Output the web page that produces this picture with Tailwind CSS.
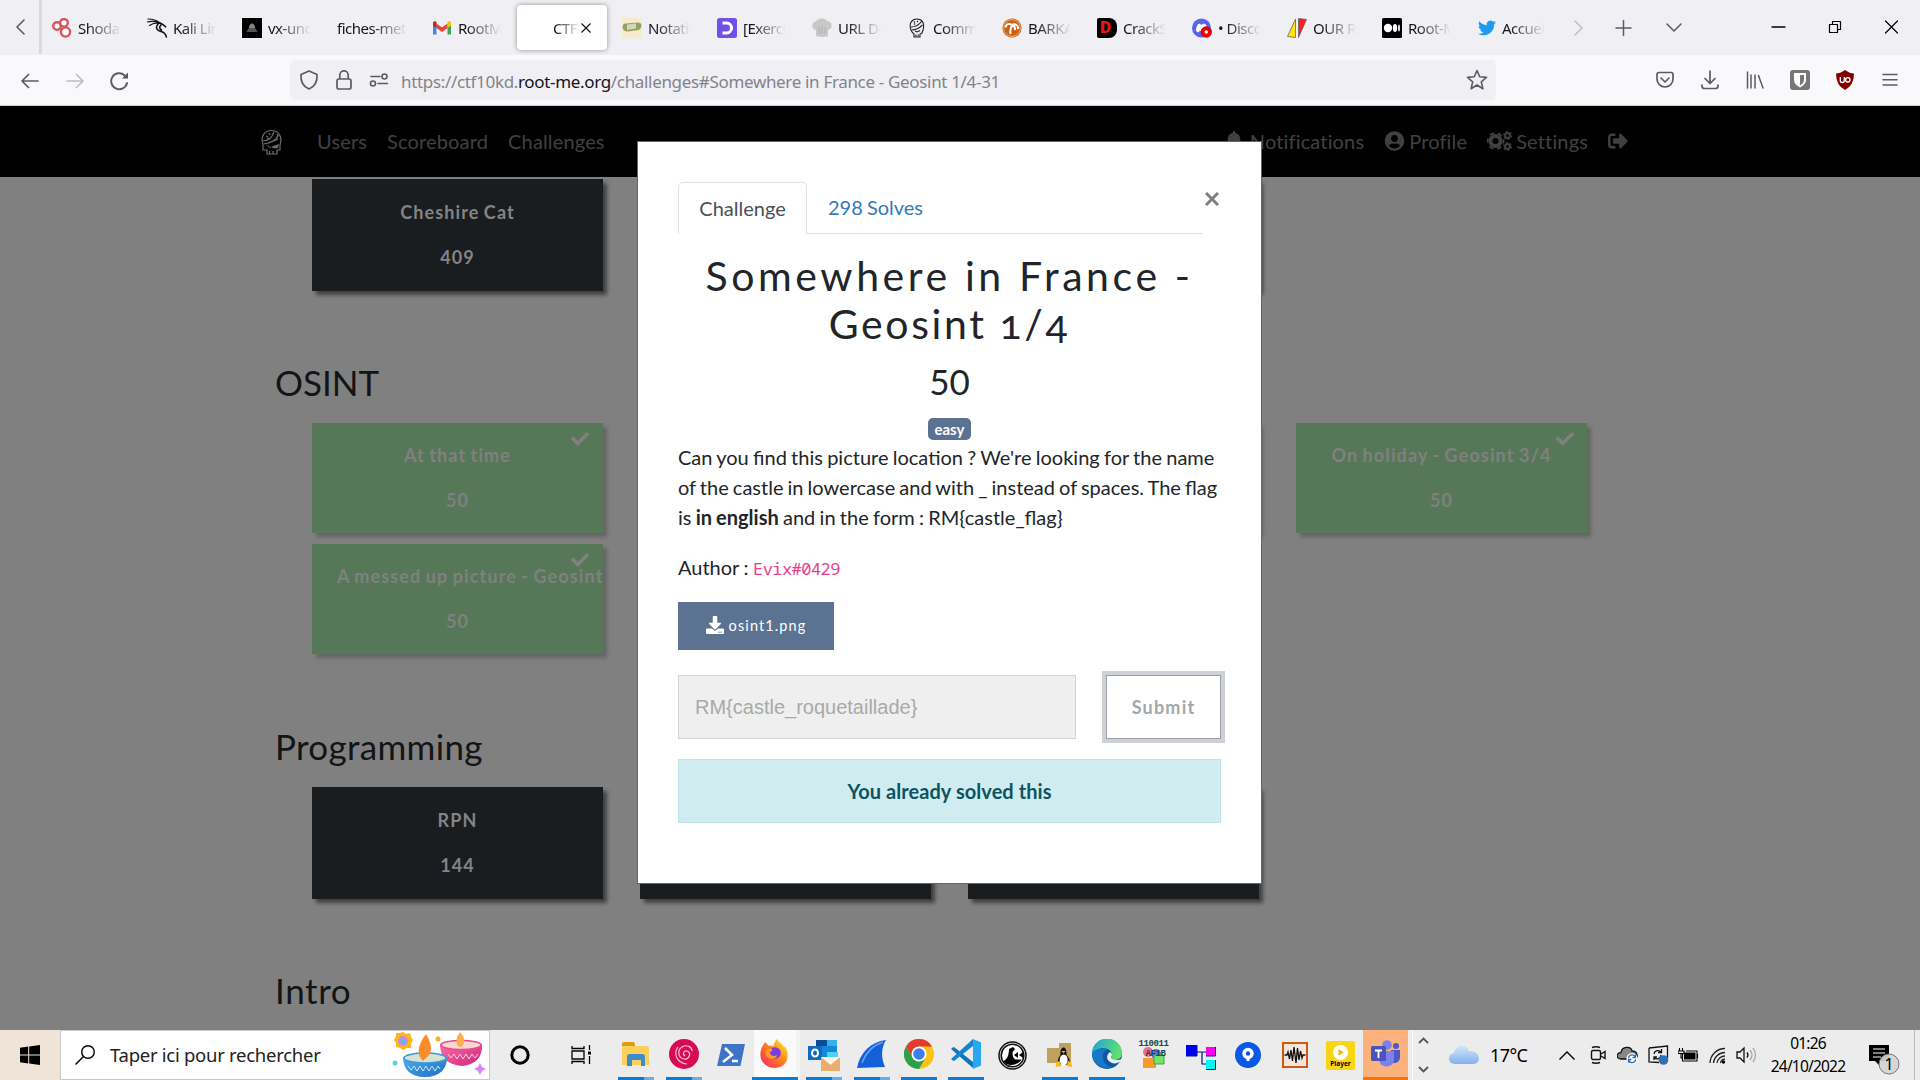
<!DOCTYPE html>
<html lang="fr">
<head>
<meta charset="utf-8">
<title>CTF</title>
<script src="https://cdn.jsdelivr.net/npm/@tailwindcss/browser@4"></script>
</head>
<body class="w-[1920px] h-[1080px] overflow-hidden flex flex-col font-['Lato',sans-serif] text-[20px] bg-[#808080]">

<!-- tab strip -->
<div class="h-[55px] shrink-0 bg-[#f0eff4] flex font-['Noto_Sans',sans-serif] text-[15px] tracking-[-0.5px] text-[#15141a]">
  <div class="w-[42px] h-[54px] flex items-center pl-[15px] border-r-[3px] border-[#d9d9de] shrink-0">
    <svg class="w-3 h-4" viewBox="0 0 12 16" fill="none" stroke="#5b5b66" stroke-width="1.6" stroke-linecap="round" stroke-linejoin="round"><path d="M9 1 2 8l7 7"/></svg>
  </div>
  <div class="w-[95px] flex items-center pl-[10px] gap-[6px] shrink-0">
    <svg class="w-5 h-5" viewBox="0 0 20 20" fill="#fff" stroke="#d6545c" stroke-width="2.4"><circle cx="5" cy="8" r="3.800"/><circle cx="12" cy="4.800" r="3.800"/><circle cx="13.500" cy="14" r="4.600"/></svg>
    <span class="w-[43px] pt-px overflow-hidden whitespace-nowrap mask-r-from-20%">Shodan</span>
  </div>
  <div class="w-[95px] flex items-center pl-[10px] gap-[6px] shrink-0">
    <svg class="w-5 h-5" viewBox="0 0 20 20" fill="none" stroke="#111" stroke-width="1.200" stroke-linecap="round"><path d="M1 1c5 0 9 1.500 12 4M0 4c4-1 8-.8 12 .8M2.500 7.500C6 5 9 4.500 12 5.500"/><path d="M12 5c3 .2 4.500 1.500 6.500 3.800M11.500 5.500c-3 3-2.500 6 .5 7.200 4 1.300 6 2 7.500 6.300M14 7c-2 2-1.500 4 .5 5" stroke-width="1.600"/></svg>
    <span class="w-[43px] pt-px overflow-hidden whitespace-nowrap mask-r-from-20%">Kali Linux</span>
  </div>
  <div class="w-[95px] flex items-center pl-[10px] gap-[6px] shrink-0">
    <svg class="w-5 h-5" viewBox="0 0 20 20"><path d="M0 0h20v20H0z"/><path d="M7 10c0-6 6-6 6 0l2.500 4h-11z" fill="#888"/><path d="M6 11h8M5 13h10" stroke="#222"/></svg>
    <span class="w-[43px] pt-px overflow-hidden whitespace-nowrap mask-r-from-20%">vx-underground</span>
  </div>
  <div class="w-[95px] flex items-center pl-[10px] shrink-0">
    <span class="w-[70px] pt-px overflow-hidden whitespace-nowrap mask-r-from-50%">fiches-methodes</span>
  </div>
  <div class="w-[95px] flex items-center pl-[10px] gap-[6px] shrink-0">
    <svg class="w-5 h-5" viewBox="0 0 20 20"><path d="M1 5v11.500h3.500V7z" fill="#4285f4"/><path d="M19 5v11.500h-3.500V7z" fill="#34a853"/><path d="M4.500 5.500 10 9.500l5.500-4V10L10 14l-5.500-4z" fill="#ea4335"/><path d="M1 5.200C1 3 3 2.700 4.500 3.900V10L1 7.500z" fill="#c5221f"/><path d="M19 5.200c0-2.200-2-2.500-3.500-1.300V10L19 7.500z" fill="#fbbc04"/></svg>
    <span class="w-[43px] pt-px overflow-hidden whitespace-nowrap mask-r-from-20%">RootMe</span>
  </div>
  <div class="w-[90px] h-[45px] mt-[5px] mr-[5px] rounded-[4px] bg-white shadow-[0_0_5px_rgba(0,0,0,0.4)] flex items-center pl-[36px] shrink-0">
    <span class="w-[26px] pt-px overflow-hidden whitespace-nowrap mask-r-from-10%">CTF10K</span>
    <svg class="ml-[1px] w-[12px] h-[12px]" viewBox="0 0 12 12" stroke="#15141a" stroke-width="1.200"><path d="m1.500 1.500 9 9M10.500 1.500l-9 9"/></svg>
  </div>
  <div class="w-[95px] flex items-center pl-[10px] gap-[6px] shrink-0">
    <svg class="w-5 h-5" viewBox="0 0 20 20"><path d="M0 0h20v20H0z" fill="#f6ebcd"/><path d="M.5 8.500q.5-3 3-3l12-1q4 0 4 3 0 3-2.500 4.500l-11 1.500Q.5 13.500.5 8.500" fill="#98a05f"/><path d="m5 6.500 9-1v5l-9 1.500z" fill="#d3d8ba"/></svg>
    <span class="w-[43px] pt-px overflow-hidden whitespace-nowrap mask-r-from-20%">Notation</span>
  </div>
  <div class="w-[95px] flex items-center pl-[10px] gap-[6px] shrink-0">
    <svg class="w-5 h-5" viewBox="0 0 20 20"><rect width="20" height="20" rx="2.500" fill="#7050e8"/><path d="M5.500 5h4a5 5 0 0 1 0 10h-4" fill="none" stroke="#fff" stroke-width="3"/></svg>
    <span class="w-[43px] pt-px overflow-hidden whitespace-nowrap mask-r-from-20%">[Exercices]</span>
  </div>
  <div class="w-[95px] flex items-center pl-[10px] gap-[6px] shrink-0">
    <svg class="w-5 h-5" viewBox="0 0 20 20" fill="#c8c8c8"><path d="M4 18v-6C-1 11-1 3.500 4 3.500 5.500-.5 14 -.5 15 3c6 0 6 8 1 9v6q-6 2-12 0"/><path d="M7 9v7M10 8v8M13 9v7" stroke="#b0b0b0"/></svg>
    <span class="w-[43px] pt-px overflow-hidden whitespace-nowrap mask-r-from-20%">URL Decode</span>
  </div>
  <div class="w-[95px] flex items-center pl-[10px] gap-[6px] shrink-0">
    <svg class="w-5 h-5" viewBox="0 0 20 20" fill="none" stroke="#222" stroke-width="1.100"><path d="M4 12C1.500 5 5 1 10 1s8 4 6 11l-1 3-2 1v3H7v-3l-2-2z"/><path d="M4 9c4 0 8-2 11-6M4.500 12c5 0 8-2 11-5M7 3.500l1 1M10 3l1 1M7 6.500l1-1M8 13l2 1 3-1.500M9 16.500v2M11.200 16.500v2"/></svg>
    <span class="w-[43px] pt-px overflow-hidden whitespace-nowrap mask-r-from-20%">Communauté</span>
  </div>
  <div class="w-[95px] flex items-center pl-[10px] gap-[6px] shrink-0">
    <svg class="w-5 h-5" viewBox="0 0 20 20"><circle cx="10" cy="10" r="9.600" fill="#ce6210"/><circle cx="10" cy="10" r="8.400" fill="none" stroke="#f3c9a0" stroke-width=".7"/><path d="M3.500 9.500C4 6 7 5 9.500 6.800M16 11c.5-4-3-6-6.500-4M13 12c.3-3-1-4.500-3-4.800M10 7.500C8.500 10 8 12.500 8.500 16" fill="none" stroke="#fff" stroke-width="2"/></svg>
    <span class="w-[43px] pt-px overflow-hidden whitespace-nowrap mask-r-from-20%">BARKA</span>
  </div>
  <div class="w-[95px] flex items-center pl-[10px] gap-[6px] shrink-0">
    <span class="w-5 h-5 pl-[3px] flex items-center rounded-r-[8px] rounded-l-[2px] bg-black text-[#f01010] font-black text-[17px] font-['Roboto',sans-serif] tracking-normal">D</span>
    <span class="w-[43px] pt-px overflow-hidden whitespace-nowrap mask-r-from-20%">CrackStation</span>
  </div>
  <div class="w-[95px] flex items-center pl-[10px] gap-[6px] shrink-0">
    <svg class="w-5 h-5" viewBox="0 0 20 20"><circle cx="9.500" cy="10" r="9.500" fill="#5865f2"/><path d="M4 13c0-3 .8-5.500 2-6.800l2-.6.600 1h2.300l.6-1 2 .6c1.200 1.300 2 3.800 2 6.800l-2.500 1.500-1-1.500H7.500l-1 1.500z" fill="#fff"/><circle cx="14.300" cy="14" r="5.700" fill="#e60000"/><circle cx="14.300" cy="14" r="1.700" fill="#fff"/></svg>
    <span class="w-[43px] pt-px overflow-hidden whitespace-nowrap mask-r-from-20%">• Discord</span>
  </div>
  <div class="w-[95px] flex items-center pl-[10px] gap-[6px] shrink-0">
    <svg class="w-5 h-5" viewBox="0 0 20 20" stroke="#555" stroke-width=".7"><path d="M8.500 1v18.500L.5 18.500z" fill="#ffe800"/><path d="m11.500.5 8 1-8 18z" fill="#fb2020"/></svg>
    <span class="w-[43px] pt-px overflow-hidden whitespace-nowrap mask-r-from-20%">OUR ROOT</span>
  </div>
  <div class="w-[95px] flex items-center pl-[10px] gap-[6px] shrink-0">
    <svg class="w-5 h-5" viewBox="0 0 20 20"><rect width="20" height="20" rx="1.500"/><g fill="#fff"><circle cx="6" cy="10" r="4.200"/><ellipse cx="13" cy="10" rx="2.200" ry="4"/><ellipse cx="17" cy="10" rx=".9" ry="3.600"/></g></svg>
    <span class="w-[43px] pt-px overflow-hidden whitespace-nowrap mask-r-from-20%">Root-Me</span>
  </div>
  <div class="w-[95px] flex items-center pl-[11px] gap-[6px] shrink-0">
    <svg class="w-[18px] h-[18px]" viewBox="0 0 24 24" fill="#1d9bf0"><path d="M23.953 4.570a10 10 0 01-2.825.775 4.958 4.958 0 002.163-2.723c-.951.555-2.005.959-3.127 1.184a4.920 4.920 0 00-8.384 4.482C7.690 8.095 4.067 6.130 1.640 3.162a4.822 4.822 0 00-.666 2.475c0 1.710.870 3.213 2.188 4.096a4.904 4.904 0 01-2.228-.616v.06a4.923 4.923 0 003.946 4.827 4.996 4.996 0 01-2.212.085 4.936 4.936 0 004.604 3.417 9.867 9.867 0 01-6.102 2.105c-.39 0-.779-.023-1.170-.067a13.995 13.995 0 007.557 2.209c9.053 0 13.998-7.496 13.998-13.985 0-.21 0-.42-.015-.63A9.935 9.935 0 0024 4.590z"/></svg>
    <span class="w-[43px] pt-px overflow-hidden whitespace-nowrap mask-r-from-20%">Accueil</span>
  </div>
  <div class="flex-1 flex items-center pl-[12px] pr-[21px]">
    <svg class="w-full h-5" viewBox="0 0 325 20" fill="none" stroke-width="1.500" stroke-linecap="round" stroke-linejoin="round"><path d="m1 3 7 7-7 7" stroke="#bebec5"/><path d="M42 10h15M49.500 2.500v15" stroke="#5b5b66"/><path d="m93 6 7 7 7-7" stroke="#5b5b66"/><path d="M198 9h13" stroke="#000" stroke-width="1.300"/><path d="M255.500 6.500h8v8h-8zM258.500 6V3.500h8v8H264" stroke="#000" stroke-width="1.200"/><path d="m311.500 3 12 12m0-12-12 12" stroke="#000" stroke-width="1.200"/></svg>
  </div>
</div>

<!-- address bar -->
<div class="h-[51px] shrink-0 bg-[#f9f9fb] border-b border-[#c9cdc9] flex items-center">
  <div class="w-[290px] flex items-center pl-[20px] gap-[24px]">
    <svg class="w-5 h-5" viewBox="0 0 20 20" fill="none" stroke="#5b5b66" stroke-width="1.700" stroke-linecap="round" stroke-linejoin="round"><path d="M18 11H2m6.500-6.500L2 11l6.500 6.500"/></svg>
    <svg class="w-5 h-5 ml-[1px]" viewBox="0 0 20 20" fill="none" stroke="#bdbdc3" stroke-width="1.700" stroke-linecap="round" stroke-linejoin="round"><path d="M2 11h16m-6.500-6.500L18 11l-6.500 6.500"/></svg>
    <svg class="w-5 h-5 mt-[2px]" viewBox="0 0 20 20" fill="none" stroke="#5b5b66" stroke-width="1.900" stroke-linecap="round"><path d="M18 12A8 8 0 1 1 15.500 4.200"/><path d="M19 1.500v6h-6z" fill="#5b5b66" stroke="none"/></svg>
  </div>
  <div class="w-[1206px] h-10 rounded-[5px] bg-[#f0eff4] flex items-center pl-[9px] pr-[6px]">
    <svg class="w-5 h-5" viewBox="0 0 20 20" fill="none" stroke="#5b5b66" stroke-width="1.700" stroke-linejoin="round"><path d="M10 1 18 4.500C18.500 12 15 17 10 19 5 17 1.500 12 2 4.500z"/></svg>
    <svg class="w-5 h-5 ml-[15px]" viewBox="0 0 20 20" fill="none" stroke="#5b5b66" stroke-width="1.700"><rect x="3" y="9" width="14" height="10" rx="2"/><path d="M5.800 9V5a4.200 4.200 0 0 1 8.400 0v4"/></svg>
    <svg class="w-5 h-5 ml-[15px]" viewBox="0 0 20 20" fill="none" stroke="#5b5b66" stroke-width="1.600" stroke-linecap="round"><path d="M2 6.500h9M9 13.500h9.500"/><circle cx="15.500" cy="6.500" r="2.500"/><circle cx="4" cy="13.500" r="2.500"/></svg>
    <span class="ml-[12px] pt-[3px] font-['Noto_Sans',sans-serif] text-[17px] tracking-[-0.330px] text-[#83838a] whitespace-nowrap">https://ctf10kd.<span class="text-[#15141a]">root-me.org</span>/challenges#Somewhere in France - Geosint 1/4-31</span>
    <svg class="w-[22px] h-[22px] ml-auto mr-[2px]" viewBox="0 0 22 22" fill="none" stroke="#5b5b66" stroke-width="1.600" stroke-linejoin="round"><path d="m11 1.500 2.700 6.300 6.800.6-5.200 4.500 1.600 6.800L11 16l-5.900 3.700 1.600-6.800L1.500 8.400l6.800-.6z"/></svg>
  </div>
  <div class="flex-1 flex items-center justify-between pl-[159px] pr-[20px]">
    <svg class="w-5 h-5" viewBox="0 0 20 20" fill="none" stroke="#5b5b66" stroke-width="1.700" stroke-linecap="round" stroke-linejoin="round"><path d="M4 2.500h12q2 0 2 2V9a8 8 0 0 1-16 0V4.500q0-2 2-2z"/><path d="m6 8 4 4 4-4"/></svg>
    <svg class="w-5 h-5" viewBox="0 0 20 20" fill="none" stroke="#5b5b66" stroke-width="1.700" stroke-linecap="round" stroke-linejoin="round"><path d="M10 1v12M5 8.500l5 5 5-5M2 15v1q0 2.500 2.500 2.500h11q2.500 0 2.500-2.500v-1"/></svg>
    <svg class="w-5 h-5" viewBox="0 0 20 20" fill="none" stroke="#5b5b66" stroke-width="1.500" stroke-linecap="round"><path d="M2.500 2v16M6 5v13M10 5v13M13.500 5.500 18 18"/></svg>
    <svg class="w-5 h-5" viewBox="0 0 20 20"><rect width="20" height="20" rx="3" fill="#777"/><path d="M4 3h12v7q0 4-6 7.500Q4 14 4 10z" fill="#fff"/><path d="M10 5h4v5q0 3-4 5.500z" fill="#777"/></svg>
    <svg class="w-5 h-5" viewBox="0 0 20 20"><path d="M10 0q5 3.500 9 3.500 0 12-9 16.500Q1 15.500 1 3.500 5 3.500 10 0" fill="#800000"/><path d="M5.300 7v3.500a2 2 0 0 0 4 0V7" fill="none" stroke="#fff" stroke-width="1.300"/><circle cx="12.800" cy="9.800" r="2.200" fill="none" stroke="#fff" stroke-width="1.300"/></svg>
    <svg class="w-5 h-5" viewBox="0 0 20 20" fill="none" stroke="#5b5b66" stroke-width="1.500" stroke-linecap="round"><path d="M3 4.500h14M3 9.800h14M3 15h14"/></svg>
  </div>
</div>

<!-- page -->
<div class="h-[924px] shrink-0 relative overflow-hidden">
  <nav class="h-[71px] pb-[2px] bg-black flex items-center pl-[261px] pr-[292px] text-[#404040] tracking-[0.150px]">
    <svg class="w-[21px] h-[27px] mt-[4px]" viewBox="0 0 21 27" fill="none" stroke="#6c6c6c" stroke-width="1.200"><path d="M2 16C-1 7 4 1.500 10.500 1.500S22 7 19 16v5h-3v4H6v-4H2z"/><path d="M2 12c6 0 9-3 11-9M2.500 15c8-1 13-4 15-9"/><path d="m5 7 2 1M8 4l1 2M6 10l2-1M13 12l4-2M16 5l1 2"/><path d="m5 16 4 3 3-2 6-2-1 4-4 .5z" fill="#6c6c6c" stroke="none"/><path d="M8.500 22v3M12 22v3"/></svg>
    <span class="ml-[35px]">Users</span>
    <span class="ml-5">Scoreboard</span>
    <span class="ml-5">Challenges</span>
    <div class="ml-auto flex items-center gap-5">
      <span class="flex items-center gap-[7px]"><svg class="w-[18px] h-5" viewBox="0 0 448 512" fill="currentColor"><path d="M224 512c35.320 0 63.970-28.650 63.970-64H160.030c0 35.350 28.650 64 63.970 64zm215.390-149.710c-19.320-20.760-55.470-51.990-55.470-154.290 0-77.700-54.480-139.900-127.940-155.160V32c0-17.670-14.320-32-31.980-32s-31.980 14.330-31.980 32v20.840C118.560 68.100 64.080 130.300 64.080 208c0 102.300-36.150 133.530-55.470 154.290-6 6.450-8.660 14.160-8.610 21.710.11 16.400 12.980 32 32.100 32h383.800c19.120 0 32-15.600 32.100-32 .05-7.550-2.610-15.270-8.610-21.710z"/></svg>Notifications</span>
      <span class="flex items-center gap-[4px]"><svg class="w-[21px] h-5" viewBox="0 0 496 512" fill="currentColor"><path d="M248 8C111 8 0 119 0 256s111 248 248 248 248-111 248-248S385 8 248 8zm0 96c48.600 0 88 39.400 88 88s-39.400 88-88 88-88-39.400-88-88 39.400-88 88-88zm0 344c-58.700 0-111.300-26.600-146.500-68.200 18.800-35.400 55.600-59.800 98.500-59.800 2.400 0 4.800.4 7.100 1.100 13 4.200 26.600 6.900 40.900 6.900 14.300 0 28-2.700 40.900-6.900 2.300-.7 4.700-1.100 7.100-1.100 42.900 0 79.700 24.400 98.500 59.800C359.300 421.400 306.700 448 248 448z"/></svg>Profile</span>
      <span class="flex items-center gap-[4px]"><svg class="w-[25px] h-5" viewBox="0 0 25 20" fill="none" stroke="currentColor"><circle cx="8.500" cy="10" r="5" stroke-width="4"/><circle cx="8.500" cy="10" r="8" stroke-width="2" stroke-dasharray="4.400 3.977" stroke-dashoffset="2"/><circle cx="20.500" cy="4.500" r="2.500" stroke-width="2"/><circle cx="20.500" cy="4.500" r="3.900" stroke-width="1.200" stroke-dasharray="2 2.080"/><circle cx="20.500" cy="15.500" r="2.500" stroke-width="2"/><circle cx="20.500" cy="15.500" r="3.900" stroke-width="1.200" stroke-dasharray="2 2.080"/></svg>Settings</span>
      <svg class="w-5 h-5" viewBox="0 0 512 512" fill="currentColor"><path d="M497 273L329 441c-15 15-41 4.500-41-17v-96H152c-13.300 0-24-10.700-24-24v-96c0-13.300 10.700-24 24-24h136V88c0-21.400 25.900-32 41-17l168 168c9.300 9.400 9.300 24.600 0 34zM192 436v-40c0-6.600-5.400-12-12-12H96c-17.700 0-32-14.300-32-32V160c0-17.700 14.300-32 32-32h84c6.600 0 12-5.400 12-12V76c0-6.600-5.400-12-12-12H96c-53 0-96 43-96 96v192c0 53 43 96 96 96h84c6.600 0 12-5.400 12-12z"/></svg>
    </div>
  </nav>

  <main class="px-[275px] pt-[2px] text-[#121416]">
    <div class="grid grid-cols-[repeat(4,291px)] gap-x-[37px] gap-y-[11px] ml-[37px]">
      <div class="h-[112px] bg-[#1a1d20] text-[#848484] shadow-[4px_4px_4px_rgba(0,0,0,0.5)] px-[25px] pt-[18px] text-center font-bold text-[18px] leading-[30px] tracking-[1.130px] [word-spacing:-1.200px]"><p>Cheshire Cat</p><p class="mt-[15px]">409</p></div>
      <div class="h-[112px] bg-[#1a1d20] shadow-[4px_4px_4px_rgba(0,0,0,0.5)]"></div>
      <div class="h-[112px] bg-[#1a1d20] shadow-[4px_4px_4px_rgba(0,0,0,0.5)]"></div>
    </div>

    <h3 class="mt-[70px] mb-[20px] text-[35px] leading-[42px]">OSINT</h3>
    <div class="grid grid-cols-[repeat(4,291px)] gap-x-[37px] gap-y-[11px] ml-[37px]">
      <div class="relative h-[110px] bg-[#577858] text-[#808080] shadow-[4px_4px_4px_rgba(0,0,0,0.22)] px-[25px] pt-[17px] text-center font-bold text-[18px] leading-[30px] tracking-[1.130px] [word-spacing:-1.200px]"><svg class="absolute right-[14px] top-[7px] w-[18px] h-[18px]" viewBox="0 0 512 512" fill="currentColor"><path d="M173.898 439.404l-166.400-166.400c-9.997-9.997-9.997-26.206 0-36.204l36.203-36.204c9.997-9.998 26.207-9.998 36.204 0L192 312.690 432.095 72.596c9.997-9.997 26.207-9.997 36.204 0l36.203 36.204c9.997 9.997 9.997 26.206 0 36.204l-294.400 294.401c-9.998 9.997-26.207 9.997-36.204-.001z"/></svg><p>At that time</p><p class="mt-[15px]">50</p></div>
      <div class="h-[110px] bg-[#577858] shadow-[4px_4px_4px_rgba(0,0,0,0.22)]"></div>
      <div class="h-[110px] bg-[#577858] shadow-[4px_4px_4px_rgba(0,0,0,0.22)]"></div>
      <div class="relative h-[110px] bg-[#577858] text-[#808080] shadow-[4px_4px_4px_rgba(0,0,0,0.22)] px-[25px] pt-[17px] text-center font-bold text-[18px] leading-[30px] tracking-[1.130px] [word-spacing:-1.200px]"><svg class="absolute right-[13px] top-[7px] w-[18px] h-[18px]" viewBox="0 0 512 512" fill="currentColor"><path d="M173.898 439.404l-166.400-166.400c-9.997-9.997-9.997-26.206 0-36.204l36.203-36.204c9.997-9.998 26.207-9.998 36.204 0L192 312.690 432.095 72.596c9.997-9.997 26.207-9.997 36.204 0l36.203 36.204c9.997 9.997 9.997 26.206 0 36.204l-294.400 294.401c-9.998 9.997-26.207 9.997-36.204-.001z"/></svg><p>On holiday - Geosint 3/4</p><p class="mt-[15px]">50</p></div>
      <div class="relative h-[110px] bg-[#577858] text-[#808080] shadow-[4px_4px_4px_rgba(0,0,0,0.22)] pl-[25px] pt-[17px] text-center font-bold text-[18px] leading-[30px] tracking-[1.130px] [word-spacing:-1.200px]"><svg class="absolute right-[14px] top-[7px] w-[18px] h-[18px]" viewBox="0 0 512 512" fill="currentColor"><path d="M173.898 439.404l-166.400-166.400c-9.997-9.997-9.997-26.206 0-36.204l36.203-36.204c9.997-9.998 26.207-9.998 36.204 0L192 312.690 432.095 72.596c9.997-9.997 26.207-9.997 36.204 0l36.203 36.204c9.997 9.997 9.997 26.206 0 36.204l-294.400 294.401c-9.998 9.997-26.207 9.997-36.204-.001z"/></svg><p class="whitespace-nowrap text-left">A messed up picture - Geosint</p><p class="mt-[15px] mr-[25px]">50</p></div>
    </div>

    <h3 class="mt-[71px] mb-[20px] text-[35px] leading-[42px] tracking-[0.330px]">Programming</h3>
    <div class="grid grid-cols-[repeat(4,291px)] gap-x-[37px] gap-y-[11px] ml-[37px]">
      <div class="h-[112px] bg-[#1a1d20] text-[#848484] shadow-[4px_4px_4px_rgba(0,0,0,0.5)] px-[25px] pt-[18px] text-center font-bold text-[18px] leading-[30px] tracking-[1.130px]"><p>RPN</p><p class="mt-[15px]">144</p></div>
      <div class="h-[112px] bg-[#1a1d20] shadow-[4px_4px_4px_rgba(0,0,0,0.5)]"></div>
      <div class="h-[112px] bg-[#1a1d20] shadow-[4px_4px_4px_rgba(0,0,0,0.5)]"></div>
    </div>

    <h3 class="mt-[70px] text-[35px] leading-[42px] tracking-[0.600px]">Intro</h3>
  </main>

  <!-- challenge dialog -->
  <div class="absolute left-[637px] top-[35px] w-[625px] h-[743px] border border-[#666] bg-white px-[40px] pt-[40px] text-[#212529]">
    <div class="flex">
      <div class="w-[525px] flex border-b border-[#dee2e6]">
        <span class="h-[52px] w-[129px] mb-[-1px] pb-[2px] flex items-center justify-center border border-b-0 border-[#dee2e6] rounded-t-[5px] bg-white text-[#495057]">Challenge</span>
        <span class="ml-[21px] h-[51px] pb-px flex items-center text-[#337ab7] [word-spacing:-1px]">298 Solves</span>
      </div>
      <svg class="ml-[2px] mt-[10px] w-[14px] h-[14px]" viewBox="0 0 14 14" stroke="#7f7f7f" stroke-width="3"><path d="m1 1 12 12M13 1 1 13"/></svg>
    </div>
    <h2 class="mt-[18px] flex flex-col items-center text-[41px] leading-[48px] oldstyle-nums"><span class="tracking-[3.600px]">Somewhere in France -</span><span class="tracking-[2.600px]">Geosint 1/4</span></h2>
    <h3 class="mt-[12px] text-center text-[35px] leading-[42px]">50</h3>
    <div class="mt-[16px] flex justify-center"><span class="h-[22px] w-[43px] rounded-[5px] bg-[#5b7290] text-white font-bold text-[15px] flex items-center justify-center">easy</span></div>
    <p class="mt-[2px] leading-[30px] whitespace-nowrap [word-spacing:-0.850px]">Can you find this picture location ? We're looking for the name<br><span class="[word-spacing:-1.020px]">of the castle in lowercase and with _ instead of spaces. The flag</span><br>is <b>in english</b> and in the form : RM{castle_flag}</p>
    <p class="mt-[20px] leading-[30px] [word-spacing:-0.600px]">Author : <code class="text-[#e83e8c] text-[17px] tracking-[-0.550px] font-['Noto_Sans_Mono','DejaVu_Sans_Mono',monospace]">Evix#0429</code></p>
    <div class="mt-[18px] w-[156px] h-[48px] bg-[#5b7290] text-white flex items-center justify-center gap-[5px] text-[14.500px] tracking-[1.100px]"><svg class="w-[18px] h-[18px] mb-[2px]" viewBox="0 0 512 512" fill="currentColor"><path d="M216 0h80c13.300 0 24 10.700 24 24v168h87.700c17.800 0 26.700 21.500 14.100 34.100L269.700 378.300c-7.500 7.500-19.800 7.500-27.300 0L90.100 226.100c-12.600-12.600-3.700-34.100 14.100-34.100H192V24c0-13.300 10.700-24 24-24zm296 376v112c0 13.300-10.700 24-24 24H24c-13.300 0-24-10.700-24-24V376c0-13.300 10.700-24 24-24h146.700l49 49c20.100 20.100 52.500 20.100 72.600 0l49-49H488c13.300 0 24 10.700 24 24zm-124 88c0-11-9-20-20-20s-20 9-20 20 9 20 20 20 20-9 20-20zm64 0c0-11-9-20-20-20s-20 9-20 20 9 20 20 20 20-9 20-20z"/></svg>osint1.png</div>
    <div class="mt-[25px] flex justify-between">
      <div class="w-[398px] h-[64px] border border-[#ced4da] bg-[#efefef] text-[#a9a9a9] pl-[16px] flex items-center font-['Liberation_Sans',sans-serif]">RM{castle_roquetaillade}</div>
      <div class="w-[115px] h-[64px] border border-[#9b9fa4] bg-white outline-[4px] outline-[#ced2d6] flex items-center justify-center text-[#a3a7ab] font-bold text-[18px] tracking-[1.200px]">Submit</div>
    </div>
    <div class="mt-[20px] h-[64px] border border-[#bee5eb] bg-[#d1ecf1] text-[#0c5460] font-bold flex items-center justify-center tracking-[0.060px]">You already solved this</div>
  </div>
</div>

<!-- taskbar -->
<div class="h-[50px] shrink-0 bg-[#ececec] flex text-black font-['Noto_Sans',sans-serif]">
  <div class="w-[60px] bg-[#f0e4d9] flex items-center justify-center">
    <svg class="w-5 h-5" viewBox="0 0 20 20"><path d="M0 2.800 8.200 1.500v8H0zM9.200 1.400 20 0v9.500H9.200zM0 10.500h8.200v8L0 17.300zM9.200 10.500H20V20L9.200 18.600z"/></svg>
  </div>
  <div class="w-[430px] border border-[#c8c8c8] bg-white flex items-center pl-[14px]">
    <svg class="w-5 h-5" viewBox="0 0 20 20" fill="none" stroke="#000" stroke-width="1.400"><circle cx="13" cy="7" r="6.300"/><path d="M8.500 11.500.5 19.500"/></svg>
    <span class="ml-[15px] w-[282px] text-[18.500px] tracking-[-0.270px] text-[#222] whitespace-nowrap">Taper ici pour rechercher</span>
    <svg class="w-[94px] h-[46px]" viewBox="0 0 94 46">
      <defs><linearGradient id="pk" x1="0" y1="0" x2="1" y2="1"><stop stop-color="#ff70ac"/><stop offset="1" stop-color="#cc2478"/></linearGradient><linearGradient id="bl" x1="0" y1="0" x2="1" y2="1"><stop stop-color="#52b4f0"/><stop offset="1" stop-color="#1c6cc0"/></linearGradient></defs>
      <path d="M48 12q21-4 42 0c1 12-6 21-20 22-14-1-22-8-22-22" fill="url(#pk)"/><ellipse cx="69" cy="13" rx="20" ry="4.500" fill="#f9d9cf" stroke="#e84b92" stroke-width="1.600"/><path d="m56 22 3 4 3-4 3 5 3-5 3 5 3-5 3 5 3-5 3 4 3-4" fill="none" stroke="#fbd0e2"/><path d="M67 15q-6-6 1-15 8 9 1 15z" fill="#fbb04c"/>
      <path d="M11 25q22-5 44 0c0 12-7 20-22 20-15 0-22-8-22-20" fill="url(#bl)"/><ellipse cx="33" cy="26" rx="21" ry="5" fill="#d5e3d3" stroke="#3a9ae0" stroke-width="1.600"/><path d="m16 34 3 4 3-4 3 5 3-5 3 5 3-5 3 5 3-5 3 5 3-5 2 3" fill="none" stroke="#c6e6fb"/><path d="M31 29q-10-10 3-27 10 17 0 24z" fill="#fb8c2c"/>
      <path d="m11 0 3 2 4-1 1 4 2 3-2 4v4l-4 0-4 2-3-2-4-1v-4L2 8l2-4 0-3 4 0z" fill="#fdb813"/><circle cx="11" cy="9" r="5" fill="#c48bea"/><circle cx="11" cy="9" r="2.200" fill="#48c9e8"/><circle cx="46" cy="7" r="2.500" fill="#fbae17"/><circle cx="3" cy="31" r="2.500" fill="#5fd3e6"/><path d="m88 31 2 4 4 2-4 2-2 4-2-4-4-2 4-2z" fill="#d681f5"/>
    </svg>
  </div>
  <div class="w-[60px] flex items-center justify-center"><svg class="w-5 h-5" viewBox="0 0 20 20" fill="none" stroke="#000" stroke-width="3"><circle cx="10" cy="10" r="8.200"/></svg></div>
  <div class="w-[61px] flex items-center justify-center"><svg class="w-5 h-5" viewBox="0 0 20 20" fill="none" stroke="#000" stroke-width="1.300"><path d="M1 1v2.500h12V1M1 19v-2.500h12V19M1 6h12v8H1zM18.500 0v5M18.500 11v8"/><path d="M17 6.500h3v3h-3z" fill="#000" stroke="none"/></svg></div>

  <div class="w-[50px] flex flex-col items-center"><div class="flex-1 flex items-center"><svg class="w-[28px] h-6" viewBox="0 0 28 24"><path d="M0 2q0-2 2-2h10l1 2v3H0z" fill="#dd9c0c"/><path d="M0 4h25q2 0 2 2v17H0z" fill="#fdd05c"/><path d="M5 24v-9q0-3 3-3h12q3 0 3 3v9h-4v-6h-9v6z" fill="#3c8ecb"/></svg></div><div class="w-9 h-[3px] flex bg-[#0a7bd6]"><div class="w-[10px] h-full ml-auto bg-[#67aee6]"></div></div></div>
  <div class="w-[46px] flex flex-col items-center"><div class="flex-1 flex items-center"><svg class="w-[30px] h-[30px]" viewBox="0 0 30 30"><circle cx="15" cy="15" r="15" fill="#d70a53"/><path d="M16 17c-3-2-1-6 2-5 5 2 2 9-3 8-6-1-7-9-2-12 5-3 10 0 10 4M18 25C8 24 4 15 9 8" fill="none" stroke="#f6c8d6" stroke-width="1.200"/></svg></div><div class="w-9 h-[3px] flex bg-[#0a7bd6]"><div class="w-[10px] h-full ml-auto bg-[#67aee6]"></div></div></div>
  <div class="w-[47px] flex items-center justify-center"><svg class="w-7 h-[22px]" viewBox="0 0 28 22"><path d="M5 0h23l-4.500 22H0z" fill="#3d74c8"/><path d="m8 4 7 7-9 7M15 17h6" fill="none" stroke="#fff" stroke-width="2.500"/></svg></div>
  <div class="w-[46px] flex flex-col items-center bg-[#fafafa] border-r-[4px] border-[#f4f4f4]"><div class="flex-1 flex items-center"><svg class="w-[29px] h-[29px] mr-[2px]" viewBox="0 0 29 29"><defs><linearGradient id="fx" x1="1" y1="0" x2="0" y2="1"><stop offset=".1" stop-color="#ffe226"/><stop offset=".5" stop-color="#ff7a20"/><stop offset="1" stop-color="#f0206c"/></linearGradient></defs><path d="M2 8 5 3l4 4q3-1 5 0c0-3 1-5 3-7 2 4 6 4 7 9l1-2c5 8 4 21-10 22C4 29-3 19 2 8" fill="url(#fx)"/><circle cx="15" cy="14" r="5.800" fill="#7a3be0"/><path d="M5 12q4-3 7-2 1 2-2 3c0 4 4 5 7 3 0 5-9 5-11 0" fill="#ff9a28"/></svg></div><div class="w-[46px] h-[3px] bg-[#0a7bd6]"></div></div>
  <div class="w-[48px] flex flex-col items-center"><div class="flex-1 flex items-center"><svg class="w-8 h-8 mt-[3px]" viewBox="0 0 32 32"><path d="M8 1h21v18H8z" fill="#1489d8"/><path d="M19 1h10v6H19z" fill="#35b1ee"/><path d="M8 1h11v6H8z" fill="#0a4f96"/><path d="M19 13h11v8H19z" fill="#50d0f8"/><path d="M0 7h14v14H0z" fill="#0f6cbd"/><ellipse cx="7" cy="14" rx="3" ry="3.500" fill="none" stroke="#fff" stroke-width="2"/><path d="M13 18h19v14H13z" fill="#e9ae6c"/><path d="m13 18 9.500 8 9.500-8z" fill="#fff3e2"/></svg></div><div class="w-9 h-[3px] flex bg-[#0a7bd6]"><div class="w-[10px] h-full ml-auto bg-[#67aee6]"></div></div></div>
  <div class="w-[47px] flex flex-col items-center"><div class="flex-1 flex items-center"><svg class="w-[29px] h-7" viewBox="0 0 29 28"><path d="M0 28C3 12 14 2 29 0c-5 8-5 18-1 27z" fill="#1560d8"/><path d="M5 23C9 12 17 5 26 2" fill="none" stroke="#62a0f4" stroke-width="1.500"/></svg></div><div class="w-9 h-[3px] flex bg-[#0a7bd6]"><div class="w-[10px] h-full ml-auto bg-[#67aee6]"></div></div></div>
  <div class="w-[47px] flex flex-col items-center"><div class="flex-1 flex items-center"><svg class="w-[30px] h-[30px]" viewBox="0 0 30 30"><circle cx="15" cy="15" r="15" fill="#fbc116"/><path d="M2 7.500A15 15 0 0 1 28 7.500H15L8.500 19z" fill="#e33b2e"/><path d="M2 7.500 8.500 18.700 15 22.500 21.500 18.700 15 30A15 15 0 0 1 2 7.500" fill="#2aa14b"/><circle cx="15" cy="15" r="7.500" fill="#fff"/><circle cx="15" cy="15" r="5.800" fill="#3b7ded"/></svg></div><div class="w-9 h-[3px] bg-[#0a7bd6]"></div></div>
  <div class="w-[47px] flex flex-col items-center"><div class="flex-1 flex items-center"><svg class="w-[30px] h-[30px]" viewBox="0 0 30 30"><path d="M0 10q2-2 3-2l19 15v6z" fill="#0b75c0"/><path d="M0 20q2 2 3 2L22 7V0z" fill="#1584d0"/><path d="m22 0 8 3.500v23L22 30z" fill="#2aa7f2"/></svg></div><div class="w-9 h-[3px] bg-[#0a7bd6]"></div></div>
  <div class="w-[47px] flex items-center justify-center"><svg class="w-[29px] h-[29px]" viewBox="0 0 29 29"><circle cx="14.500" cy="14.500" r="13.500" fill="#fff" stroke="#111" stroke-width="1.500"/><circle cx="14.500" cy="14.500" r="11.300" fill="none" stroke="#111" stroke-width="1.600"/><path d="M5 20c4-1 6-6 6-12l4-2 2 2-2.500 3c0 4 .5 6 3 7.500h6c-4 7-15 7-18.500 1.500M20 11v6l-4-3zM25 11v6l-4-3z"/></svg></div>
  <div class="w-[47px] flex flex-col items-center"><div class="flex-1 flex items-center"><svg class="w-[26px] h-6 mt-[3px]" viewBox="0 0 26 24"><path d="M0 5h12V0h12v20H0z" fill="#bfa05c"/><path d="M11 21q-1-5 2.500-9C12.500 2 20.500 2 19.500 12 23 16 23.500 18 22 22z" fill="#111"/><ellipse cx="16.700" cy="17" rx="4" ry="5.500" fill="#fff"/><path d="M14.500 8h4l-2 2.500z" fill="#fbb916"/><path d="m9.500 19 3-1 2 5-6 1zM24 19l-3-1-1.500 5 6 1z" fill="#fbb916"/></svg></div><div class="w-9 h-[3px] bg-[#0a7bd6]"></div></div>
  <div class="w-[47px] flex flex-col items-center"><div class="flex-1 flex items-center"><svg class="w-[30px] h-[30px]" viewBox="0 0 30 30"><defs><linearGradient id="eg" x1="0" y1="0" x2="1" y2=".3"><stop stop-color="#1d9fe0"/><stop offset="1" stop-color="#5fe070"/></linearGradient></defs><circle cx="15" cy="15" r="15" fill="#0c59a4"/><path d="M0 15a15 15 0 0 1 30-1c0 5-4 7-8 7-4-1-3-3-2-4C21 8 6 6 0 15" fill="url(#eg)"/><path d="M0 14C4 9 11 9 15 11c-5 2-6 9-1 14 2 2 4 3 6 3A15 15 0 0 1 0 14" fill="#1678c8"/><path d="M18 13c3 2 2 4 1 5 0 3 6 4 11 2l-1 2c-3 2-6 3-9 2-5-2-7-7-2-11" fill="#eee"/></svg></div><div class="w-9 h-[3px] bg-[#0a7bd6]"></div></div>
  <div class="w-[47px] flex items-center justify-center"><div class="relative w-[30px] h-[27px] leading-none"><svg class="w-full h-full" viewBox="0 0 30 27"><circle cx="9" cy="10" r="5" fill="#f06a8c"/><circle cx="17" cy="12" r="5" fill="#6b6bea"/><path d="M4 16h13v10H4z" fill="#f79a2c"/><path d="M15 13h10v9H15z" fill="#74e36e" stroke="#3aa53a"/></svg><span class="absolute -top-[2px] left-0 text-[9px] font-['Liberation_Mono',monospace] text-[#0b4a4a] tracking-[-0.400px] font-bold">110011</span><span class="absolute top-[8px] left-[7px] text-[9px] font-['Liberation_Mono',monospace] text-[#0b4a4a] tracking-[-0.400px] font-bold">AF1B</span></div></div>
  <div class="w-[47px] flex items-center justify-center"><svg class="w-[30px] h-[25px] mt-[5px]" viewBox="0 0 30 25"><path d="M10 7h10M16 7v12h4" fill="none" stroke="#001090" stroke-width="1.200"/><path d="M0 0h11v11H0z" fill="#0000f0"/><path d="M20 2h9v9h-9z" fill="#ff00f0"/><path d="M20 15h9v9h-9z" fill="#00f8f8"/><path d="M0 11h11V0M20 11h9.500V2M20 24.500h9.500V15" fill="none" stroke="#001090"/></svg></div>
  <div class="w-[47px] flex items-center justify-center"><svg class="w-[26px] h-[26px]" viewBox="0 0 26 26"><circle cx="13" cy="13" r="13" fill="#0a58e6"/><circle cx="13" cy="11.500" r="4" fill="none" stroke="#fff" stroke-width="3.500"/><path d="M11.500 15h3v4h-3z" fill="#fff"/></svg></div>
  <div class="w-[47px] flex items-center justify-center"><svg class="w-[26px] h-[26px]" viewBox="0 0 26 26"><path d="M1 1h24v24H1z" fill="#f4e6dc" stroke="#cf5a14" stroke-width="2"/><path d="M2.500 13H5l1-3 1.500 7L9 8l1.500 11L12 5l2 16 1.500-15L17 18l1.500-9L20 16l1-3h2.500" fill="none" stroke="#111" stroke-width="1.300"/></svg></div>
  <div class="w-[45px] flex items-center justify-center"><div class="w-[29px] h-[29px] rounded-[2px] bg-[#f9d515] flex flex-col items-center pt-[4px]"><svg class="w-[15px] h-[15px]" viewBox="0 0 15 15"><circle cx="7.500" cy="7.500" r="7.500" fill="#fff"/><path d="m5.500 4 5 3.500-5 3.500z" fill="#f2b800"/></svg><span class="text-[6.500px] leading-[8px] font-bold">Player</span></div></div>
  <div class="w-[45px] flex flex-col items-center bg-[#fcb27c]"><div class="flex-1 flex items-center"><svg class="w-[29px] h-[27px]" viewBox="0 0 29 27"><circle cx="25" cy="6" r="3" fill="#5059c9"/><circle cx="16" cy="5" r="4.800" fill="#7b83eb"/><path d="M20 10h9v8q-1 6-8 5z" fill="#5059c9"/><path d="M8 11h15v8c0 10-15 10-15 0z" fill="#7b83eb"/><rect y="6" width="15" height="15" rx="1.500" fill="#4b53bc"/><path d="M4 10.500h7M7.500 10.500V18" stroke="#fff" stroke-width="1.800"/></svg></div><div class="w-full h-[3px] bg-[#ff7300]"></div></div>
  <div class="w-[29px] ml-[4px] mr-[8px] border-l border-white flex items-center pl-[5px]"><svg class="w-[11px] h-[38px]" viewBox="0 0 11 38" fill="none" stroke="#555" stroke-width="1.800"><path d="m1 7 4.500-4.500L10 7M1 31l4.500 4.500L10 31"/></svg></div>
  <svg class="w-[30px] h-5 mt-[15px]" viewBox="0 0 30 20"><defs><linearGradient id="cl" x1="0" y1="0" x2="0" y2="1"><stop stop-color="#d6e6fb"/><stop offset="1" stop-color="#83b0ec"/></linearGradient></defs><path d="M6 19C-2 19-2 9 5 8 7-1 18-2 20 6c12-1 13 13 4 13z" fill="url(#cl)"/></svg>
  <span class="ml-[11px] w-[69px] flex items-center text-[18px] tracking-[-0.600px] whitespace-nowrap">17°C</span>
  <div class="flex items-center w-[198px] justify-between">
    <svg class="w-4 h-[9px]" viewBox="0 0 16 9" fill="none" stroke="#000" stroke-width="1.400"><path d="m.5 8.500 7.500-7.500 7.500 7.500"/></svg>
    <svg class="w-4 h-[18px] ml-[5px]" viewBox="0 0 16 18" fill="none" stroke="#111" stroke-width="1.400"><rect x="1.500" y="4.500" width="9" height="9" rx="1.500"/><path d="m11 8 4-2.500v7L11 10M2 1.500q4-1.500 8 0M2 16.500q4 1.500 8 0"/></svg>
    <svg class="w-[21px] h-[18px] ml-[2px]" viewBox="0 0 21 18"><path d="M4 13c-5 0-5-6 0-6.500C5 0 14 0 15 5c6 0 7 8 2 8z" fill="#888" stroke="#111" stroke-width="1.300"/><circle cx="15" cy="12.500" r="5.500" fill="#fff"/><path d="M11.500 12a3.700 3.700 0 0 1 7-1m.2 2.500a3.700 3.700 0 0 1-7 1M18.500 8.500v3h-3M11.500 16.500v-3h3" fill="none" stroke="#1a6fc4" stroke-width="1.300"/></svg>
    <svg class="w-[21px] h-5" viewBox="0 0 21 20" fill="none" stroke="#111" stroke-width="1.300"><path d="m1 3 18.500-2v12M1 3v14l10 .5"/><path d="M6 9a4 4 0 0 1 7-2M13 10a4 4 0 0 1-7 2.500M13.500 4v3.500H10M6 15v-3h3"/><circle cx="15.500" cy="15" r="4.800" fill="#2b71bd" stroke="none"/></svg>
    <svg class="w-[21px] h-[14px]" viewBox="0 0 21 14"><path d="M6 4.500h11.500v7H6z"/><path d="M4.500 6v7H19V3H8M19.500 6v4M3 6v4h2M0 5.500h6V3H0zM1.500 3V0M4.500 3V0" fill="none" stroke="#000" stroke-width="1.100"/></svg>
    <svg class="w-[18px] h-[17px]" viewBox="0 0 18 17" fill="none" stroke="#222" stroke-width="1.300"><path d="M1 16A15 15 0 0 1 16 1.500M4.500 16A11.500 11.500 0 0 1 16 5.500M8 16a8 8 0 0 1 8-7M11.500 16a5 5 0 0 1 4.500-4"/><circle cx="14.500" cy="15" r="1.700" fill="#000" stroke="none"/></svg>
    <svg class="w-[21px] h-[18px]" viewBox="0 0 21 18" fill="none" stroke="#111" stroke-width="1.300"><path d="M1 6h3l4-4v14l-4-4H1z"/><path d="M11 6.500q2 2.500 0 5"/><path d="M14 4q4 5 0 10M17 2q5 7 0 14" stroke="#aaa"/></svg>
  </div>
  <div class="w-[102px] flex flex-col items-center text-[15.500px] leading-[23px] tracking-[-0.800px] pt-[2px]"><span>01:26</span><span>24/10/2022</span></div>
  <svg class="w-[31px] h-[31px] ml-[10px] mt-[14px]" viewBox="0 0 31 31"><path d="M0 1h20v16h-9v5l-5-5H0z"/><path d="M4 5h12M4 9h12M4 13h8" stroke="#fff" stroke-width="1.200"/><circle cx="20" cy="20" r="10" fill="#d4d4d4" fill-opacity=".92" stroke="#777"/><text x="20" y="26" font-size="16" text-anchor="middle" font-family="Noto Sans">1</text></svg>
  <div class="ml-auto w-[6px] border-l border-[#bbb]"></div>
</div>
</body>
</html>
